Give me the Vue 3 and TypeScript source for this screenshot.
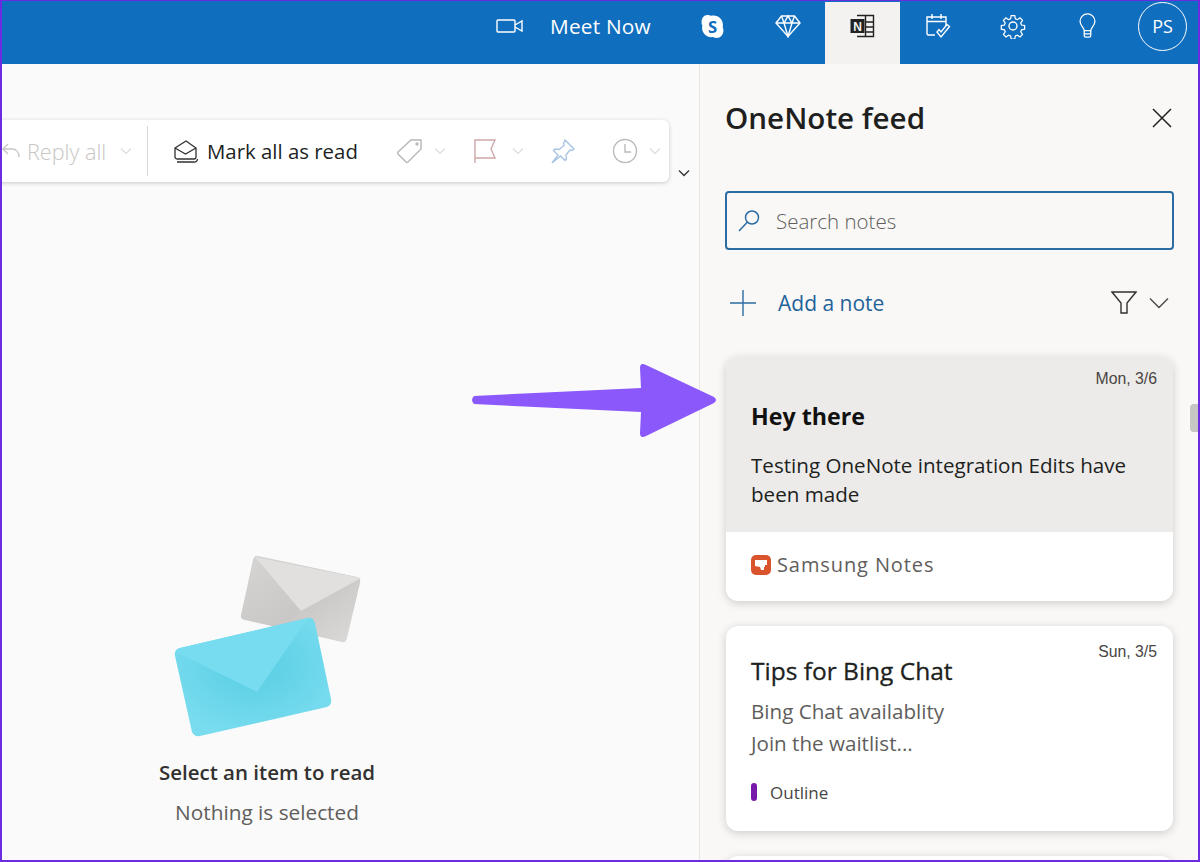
<template>
  <div class="frame">
    <!-- 顶部栏 -->
    <header class="topbar">
      <svg class="ic meet-ic" viewBox="0 0 28 18" width="28" height="18">
        <rect x="1" y="3" width="18" height="12" rx="1" />
        <path d="M19 8l7-4v10l-7-4" />
      </svg>
      <span class="meet-text">Meet Now</span>
      <div class="top-btn">
        <svg viewBox="0 0 24 24" width="25" height="25">
          <path d="M7 1c1.500 0 2.500.7 3.500.7 1 0 1.500-.2 2.500-.2 5 0 9 4 9 9 0 1 0 1.500-.2 2.300.4.900.7 1.900.7 3 0 4-2.800 7.200-6.500 7.200-1.300 0-2.400-.5-3.500-.9-.6.100-1 .1-1.500.1-5 0-9-4-9-9 0-.9.100-1.500.3-2.300C1.700 10.100 1.500 9.200 1.500 7.800 1.500 4 3.800 1 7 1z" fill="#fff" />
          <text x="12" y="18" text-anchor="middle" class="skype-s">S</text>
        </svg>
      </div>
      <div class="top-btn">
        <svg class="ic" viewBox="0 0 26 24" width="26" height="24">
          <path d="M6.500 2h13L25 9 13 22.500 1 9z" />
          <path d="M1 9h24M9 9l4 13.500L17 9M6.500 2L9 9l4-7 4 7 2.500-7" />
        </svg>
      </div>
      <div class="top-btn onenote-btn">
        <svg viewBox="0 0 28 24" width="28" height="24">
          <path d="M8 1.500h16.500v21H8" fill="none" stroke="#222" stroke-width="1.400" />
          <path d="M16.500 1.500v21M16.500 8h8M16.500 13h8M16.500 18h8" fill="none" stroke="#222" stroke-width="1.400" />
          <rect x="1.500" y="5" width="14" height="14" fill="#222" />
          <text x="8.500" y="16.500" text-anchor="middle" class="onenote-n">N</text>
        </svg>
      </div>
      <div class="top-btn">
        <svg class="ic" viewBox="0 0 26 28" width="26" height="28">
          <path d="M10 23H3.500A1.500 1.500 0 0 1 2 21.500V5h19v9" />
          <path d="M2 9.500h19M7 2v5M16 2v5" />
          <path d="M12 20l4 5 8.500-10.500-2.500-2-6 7.500-2-2.500z" />
        </svg>
      </div>
      <div class="top-btn">
        <svg class="ic" viewBox="0 0 26 26" width="26" height="26">
          <circle cx="13" cy="13" r="4" />
          <path d="M11 1.500h4l.7 3.500 2.200.9 3-2 2.800 2.800-2 3 .9 2.200 3.500.7v4l-3.500.7-.9 2.200 2 3-2.800 2.800-3-2-2.200.9-.7 3.500h-4l-.7-3.500-2.200-.9-3 2-2.800-2.800 2-3-.9-2.200-3.500-.7v-4l3.500-.7.9-2.200-2-3 2.800-2.800 3 2 2.200-.9z" transform="translate(1.400 1.400) scale(.89)" />
        </svg>
      </div>
      <div class="top-btn">
        <svg class="ic" viewBox="0 0 20 28" width="19" height="26">
          <path d="M6.500 19c0-3-4.500-5-4.500-10a8 8 0 0 1 16 0c0 5-4.500 7-4.500 10z" />
          <path d="M6.500 19v5a2 2 0 0 0 2 2h3a2 2 0 0 0 2-2v-5M6.500 22.500h7" />
        </svg>
      </div>
      <div class="avatar">PS</div>
    </header>

    <div class="body">
      <!-- 左侧阅读区 -->
      <main class="reading">
        <div class="toolbar-row">
          <div class="toolbar">
            <svg class="reply-ic" viewBox="0 0 20 20" width="20" height="20">
              <path d="M6 3L1 8l5 5M1 8h9c4 0 7 3 7 8" />
            </svg>
            <span class="reply-text">Reply all</span>
            <svg class="chev faded" viewBox="0 0 12 8" width="12" height="8"><path d="M1 1.500l5 5 5-5" /></svg>
            <span class="divider"></span>
            <svg class="mark-ic" viewBox="0 0 26 24" width="26" height="24">
              <path d="M2 9l11-7 10 7v9a2 2 0 0 1-2 2H4a2 2 0 0 1-2-2z" />
              <path d="M2 9l10.500 6L23 9" />
              <path d="M4 23h17a3 3 0 0 0 3.500-3" />
            </svg>
            <span class="mark-text">Mark all as read</span>
            <svg class="tool-ic tag" viewBox="0 0 28 26" width="28" height="26">
              <path d="M2 14L15 2h10v9L12 24a1.500 1.500 0 0 1-2 0l-8-8a1.500 1.500 0 0 1 0-2z" />
              <circle cx="21" cy="6" r="1" />
            </svg>
            <svg class="chev faded" viewBox="0 0 12 8" width="12" height="8"><path d="M1 1.500l5 5 5-5" /></svg>
            <svg class="tool-ic flag" viewBox="0 0 24 26" width="24" height="26">
              <path d="M2 25V2h20l-4 9 4 9H2" />
            </svg>
            <svg class="chev faded" viewBox="0 0 12 8" width="12" height="8"><path d="M1 1.500l5 5 5-5" /></svg>
            <svg class="tool-ic pin" viewBox="0 0 26 26" width="26" height="26">
              <path d="M15 2l9 9-2 1.500-2-.5-4 5 .5 4-1.500 1.500-4.500-4.500L2 25l6-8-4.500-4.500L5 11l4 .5 5-4-.5-2z" />
            </svg>
            <svg class="tool-ic clock" viewBox="0 0 26 26" width="26" height="26">
              <circle cx="13" cy="13" r="11.500" />
              <path d="M13 6v8h6" />
            </svg>
            <svg class="chev faded" viewBox="0 0 12 8" width="12" height="8"><path d="M1 1.500l5 5 5-5" /></svg>
          </div>
          <svg class="more-chev" viewBox="0 0 12 8" width="12" height="8"><path d="M1 1.500l5 5 5-5" /></svg>
        </div>

        <div class="empty">
          <svg class="mails" viewBox="0 0 230 210" width="230" height="210">
            <defs>
              <linearGradient id="greyBody" x1="0" y1="0" x2="1" y2="1">
                <stop offset="0" stop-color="#d6d5d4" />
                <stop offset=".55" stop-color="#c9c8c7" />
                <stop offset="1" stop-color="#dcdbda" />
              </linearGradient>
              <radialGradient id="blueBody" cx=".5" cy=".4" r=".6">
                <stop offset="0" stop-color="#57cde3" />
                <stop offset="1" stop-color="#79dcef" />
              </radialGradient>
            </defs>
            <path d="M108 16L207 37q4 1 3 6L197 98q-1 5-5 4L95 80q-5-1-4-5L103 20q1-5 5-4z" fill="url(#greyBody)" />
            <path d="M105 17L211 38 151 71z" fill="#e1e0df" />
            <path d="M30 108L158 78q5-1 7 5l16 76q1 6-4 8L50 196q-6 1-8-4L25 116q-1-7 5-8z" fill="url(#blueBody)" />
            <path d="M26 112q0-3 4-4L158 78l-51 74z" fill="#78dcf0" />
          </svg>
          <div class="empty-title">Select an item to read</div>
          <div class="empty-sub">Nothing is selected</div>
        </div>
      </main>

      <!-- OneNote 面板 -->
      <aside class="panel">
        <div class="panel-head">
          <h1>OneNote feed</h1>
          <svg class="close-ic" viewBox="0 0 20 20" width="20" height="20"><path d="M1 1l18 18M19 1L1 19" /></svg>
        </div>

        <div class="search">
          <svg class="search-ic" viewBox="0 0 24 24" width="24" height="24">
            <circle cx="15" cy="8.500" r="6.500" />
            <path d="M10.500 13L2 22" />
          </svg>
          <span>Search notes</span>
        </div>

        <div class="add-row">
          <svg class="plus-ic" viewBox="0 0 26 26" width="26" height="26"><path d="M13 0v26M0 13h26" /></svg>
          <span class="add-text">Add a note</span>
          <svg class="filter-ic" viewBox="0 0 26 24" width="26" height="24">
            <path d="M1 1h24l-9 11v10h-6V12z" />
          </svg>
          <svg class="filter-chev" viewBox="0 0 20 12" width="20" height="12"><path d="M1 1.500l9 9 9-9" /></svg>
        </div>

        <article class="note first">
          <div class="note-main active">
            <time>Mon, 3/6</time>
            <h2>Hey there</h2>
            <p>Testing OneNote integration Edits have<br />been made</p>
          </div>
          <div class="note-foot samsung">
            <svg viewBox="0 0 20 20" width="20" height="20">
              <rect width="20" height="20" rx="5" fill="#d9532c" />
              <path d="M4 5h12v5h-2v2h-1v3h-3l-1-3-5-1z" fill="#fff" />
            </svg>
            <span>Samsung Notes</span>
          </div>
        </article>

        <article class="note">
          <div class="note-main">
            <time>Sun, 3/5</time>
            <h2>Tips for Bing Chat</h2>
            <p>Bing Chat availablity<br />Join the waitlist...</p>
          </div>
          <div class="note-foot">
            <i class="section-bar"></i>
            <span>Outline</span>
          </div>
        </article>

        <article class="note cut"></article>

        <div class="scroll-thumb"></div>
      </aside>
    </div>

    <!-- 标注箭头 -->
    <svg class="arrow" viewBox="0 0 250 78" width="250" height="78">
      <path d="M4 34L171 26 170 6Q170 0 176 3L244 35Q248 38 244 41L176 74Q170 77 170 71L171 50 4 42Q0 38 4 34z" />
    </svg>
  </div>
</template>

<script setup lang="ts">
</script>

<style>
html,
body {
  margin: 0;
  background: #fff;
}
</style>

<style scoped>
.frame {
  position: relative;
  width: 1200px;
  height: 862px;
  box-sizing: border-box;
  border: 2px solid #6b2be0;
  border-top-width: 1px;
  overflow: hidden;
  display: flex;
  flex-direction: column;
  font-family: "Open Sans", "Noto Sans", "Liberation Sans", sans-serif;
  color: #201f1e;
  background: #fafafa;
}

.topbar {
  height: 63px;
  flex-shrink: 0;
  background: #106ebe;
  display: flex;
  align-items: stretch;
  padding-left: 494px;
  box-sizing: border-box;
}

.ic {
  fill: none;
  stroke: #fff;
  stroke-width: 1.400;
}

.meet-ic {
  align-self: center;
  margin-bottom: 13px;
}

.meet-text {
  align-self: center;
  margin: 0 0 13px 26px;
  width: 125px;
  font-size: 20.800px;
  color: #fff;
  letter-spacing: 0.2px;
}

.top-btn {
  width: 75px;
  padding-bottom: 13px;
  box-sizing: border-box;
  display: flex;
  align-items: center;
  justify-content: center;
  flex-shrink: 0;
}

.skype-s {
  font-size: 16px;
  font-weight: 700;
  fill: #106ebe;
  font-family: "Open Sans", sans-serif;
}

.onenote-btn {
  margin-top: 1px;
  padding-bottom: 14px;
  background: #f3f2f1;
}

.onenote-n {
  font-size: 12px;
  font-weight: 700;
  fill: #f3f2f1;
  font-family: "Liberation Sans", sans-serif;
}

.avatar {
  align-self: center;
  width: 49px;
  height: 49px;
  margin: 0 0 13px 13px;
  border: 1.500px solid #fff;
  border-radius: 50%;
  color: #fff;
  font-size: 18px;
  display: flex;
  align-items: center;
  justify-content: center;
  box-sizing: border-box;
  flex-shrink: 0;
}

.body {
  flex: 1;
  display: flex;
  min-height: 0;
}

.reading {
  width: 697px;
  flex-shrink: 0;
  overflow: hidden;
  display: flex;
  flex-direction: column;
  background: #fafafa;
}

.toolbar-row {
  display: flex;
  align-items: flex-end;
  margin-top: 56px;
  margin-left: -10px;
}

.toolbar {
  width: 677px;
  height: 62px;
  background: #fff;
  border-radius: 6px;
  box-shadow: 0 1px 4px rgba(0, 0, 0, 0.2);
  display: flex;
  align-items: center;
  box-sizing: border-box;
  padding-left: 10px;
  flex-shrink: 0;
}

.reply-ic {
  fill: none;
  stroke: #c8c6c4;
  stroke-width: 1.400;
  flex-shrink: 0;
}

.reply-text {
  margin-left: 5px;
  width: 93px;
  font-size: 21.600px;
  font-weight: 300;
  color: #c8c6c4;
  white-space: nowrap;
}

.chev {
  fill: none;
  stroke: #605e5c;
  stroke-width: 1.200;
  flex-shrink: 0;
}

.faded {
  stroke: #dedcda;
}

.divider {
  width: 1px;
  height: 50px;
  background: #d8d6d4;
  margin-left: 15px;
}

.mark-ic {
  margin-left: 25px;
  fill: none;
  stroke: #323130;
  stroke-width: 1.300;
  flex-shrink: 0;
}

.mark-text {
  margin-left: 8px;
  width: 189px;
  font-size: 20.400px;
  white-space: nowrap;
}

.tool-ic {
  fill: none;
  stroke-width: 1.400;
  flex-shrink: 0;
}

.tag {
  stroke: #b9b7b5;
  margin-right: 10px;
}

.flag {
  stroke: #cfa8a9;
  margin-left: 27px;
  margin-right: 15px;
}

.pin {
  stroke: #a9c5e4;
  margin-left: 26px;
}

.clock {
  stroke: #bdbbb9;
  margin-left: 36px;
  margin-right: 11px;
}

.more-chev {
  fill: none;
  stroke: #323130;
  stroke-width: 1.300;
  margin-left: 9px;
  margin-bottom: 5px;
  flex-shrink: 0;
}

.empty {
  margin-left: 150px;
  width: 230px;
  margin-top: 357px;
  display: flex;
  flex-direction: column;
  align-items: center;
  white-space: nowrap;
}

.mails {
  transform: translate(-2px, 1px);
}

.empty-title {
  margin-top: 9px;
  font-size: 20.500px;
  font-weight: 600;
  color: #323130;
}

.empty-sub {
  margin-top: 12px;
  font-size: 20.800px;
  color: #605e5c;
}

.panel {
  position: relative;
  flex: 1;
  min-width: 0;
  background: #f9f8f7;
  border-left: 1px solid #e8e6e4;
  box-sizing: border-box;
  padding: 0 24px 0 25px;
  overflow: hidden;
}

.panel-head {
  height: 63px;
  margin-top: 22px;
  display: flex;
  align-items: center;
  justify-content: space-between;
}

.panel-head h1 {
  margin: 0;
  font-size: 29.600px;
  font-weight: 600;
  color: #201f1e;
}

.close-ic {
  fill: none;
  stroke: #201f1e;
  stroke-width: 1.500;
  margin-right: 2px;
}

.search {
  margin-top: 42px;
  height: 59px;
  border: 2px solid #2b6ca3;
  border-radius: 4px;
  display: flex;
  align-items: center;
  padding-left: 10px;
  box-sizing: border-box;
  font-size: 20.500px;
  font-weight: 300;
  color: #605e5c;
}

.search span {
  margin-left: 15px;
}

.search-ic {
  fill: none;
  stroke: #2b6ca3;
  stroke-width: 1.500;
}

.add-row {
  margin-top: 40px;
  height: 26px;
  display: flex;
  align-items: center;
  padding-left: 5px;
}

.plus-ic {
  fill: none;
  stroke: #2b6ca3;
  stroke-width: 1.400;
}

.add-text {
  margin-left: 22px;
  flex: 1;
  font-size: 21px;
  color: #1f6399;
}

.filter-ic {
  fill: none;
  stroke: #323130;
  stroke-width: 1.400;
}

.filter-chev {
  margin-left: 12px;
  margin-right: 5px;
  fill: none;
  stroke: #484644;
  stroke-width: 1.300;
}

.note {
  margin: 25px 0 0 1px;
  width: 447px;
  background: #fff;
  border-radius: 12px;
  box-shadow: 0 2px 10px rgba(0, 0, 0, 0.18);
  overflow: hidden;
}

.first {
  margin-top: 41px;
}

.note-main {
  position: relative;
  padding: 29px 25px 0;
}

.note-main time {
  position: absolute;
  top: 17px;
  right: 16px;
  font-size: 15.800px;
  color: #484644;
  font-family: "Liberation Sans", sans-serif;
}

.note-main h2 {
  margin: 0;
  font-size: 24.500px;
  line-height: 32px;
  font-weight: 400;
  color: #201f1e;
  -webkit-text-stroke: 0.3px #201f1e;
  white-space: nowrap;
}

.note-main p {
  margin: 8px 0 0;
  font-size: 20.600px;
  line-height: 32px;
  color: #605e5c;
  white-space: nowrap;
}

.active {
  height: 175px;
  padding-top: 43px;
  box-sizing: border-box;
  background: #edebe9;
}

.active time {
  top: 13px;
}

.active h2 {
  font-size: 23.200px;
  font-weight: 700;
  color: #111;
  -webkit-text-stroke: 0;
}

.active p {
  margin-top: 19px;
  line-height: 29px;
  color: #201f1e;
}

.note-foot {
  display: flex;
  align-items: center;
  height: 72px;
  padding: 0 0 6px 25px;
  box-sizing: border-box;
  font-size: 17px;
  color: #484644;
}

.note-foot span {
  margin-left: 13px;
}

.samsung {
  height: 69px;
  padding-bottom: 4px;
  font-size: 20px;
  color: #605e5c;
  letter-spacing: 0.9px;
}

.samsung span {
  margin-left: 6px;
}

.section-bar {
  display: block;
  width: 6px;
  height: 18px;
  border-radius: 3px;
  background: #7719aa;
}

.cut {
  height: 60px;
}

.scroll-thumb {
  position: absolute;
  right: 0;
  top: 340px;
  width: 8px;
  height: 28px;
  border-radius: 4px 0 0 4px;
  background: #c8c6c4;
}

.arrow {
  position: absolute;
  left: 468px;
  top: 361px;
  fill: #8a58fb;
}
</style>
